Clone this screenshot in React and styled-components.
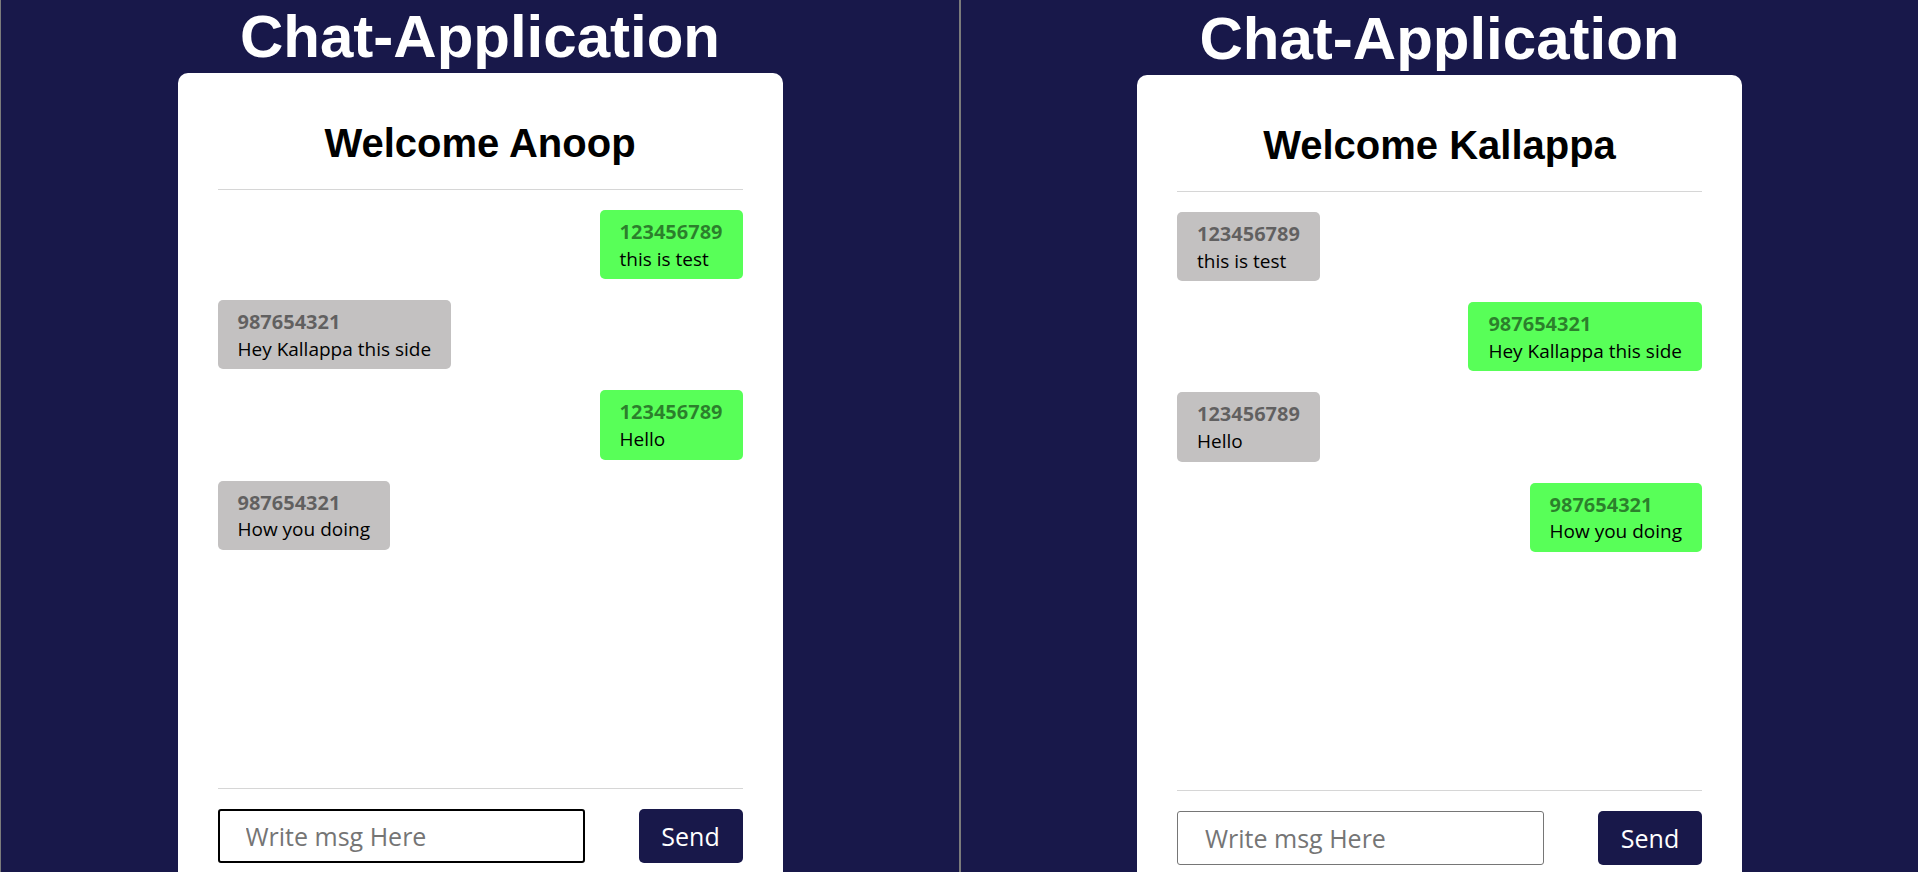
import React from 'react'
import styled, { createGlobalStyle } from 'styled-components'

const messages = [
    { from: '123456789', text: 'this is test' },
    { from: '987654321', text: 'Hey Kallappa this side' },
    { from: '123456789', text: 'Hello' },
    { from: '987654321', text: 'How you doing' },
]

function ChatWindow({ name, number, focused, edge, shift }) {
    return (
        <Pane $edge={edge} $shift={shift}>
            <Title>Chat-Application</Title>
            <Card>
                <Welcome>Welcome {name}</Welcome>
                <MessageList>
                    {messages.map((m, i) => (
                        <Bubble key={i} $mine={m.from === number}>
                            <Sender>{m.from}</Sender>
                            <Text>{m.text}</Text>
                        </Bubble>
                    ))}
                </MessageList>
                <Footer>
                    <MsgInput $focused={focused} placeholder="Write msg Here" />
                    <SendButton>Send</SendButton>
                </Footer>
            </Card>
        </Pane>
    )
}

export default function App() {
    return (
        <>
            <GlobalStyle />
            <Screen>
                <ChatWindow name="Anoop" number="123456789" focused edge={1} shift={1} />
                <ChatWindow name="Kallappa" number="987654321" edge={2} shift={3} />
            </Screen>
        </>
    )
}

const GlobalStyle = createGlobalStyle`
body {
    margin: 0;
    background: #18184a;
    overflow: hidden;
    font-family: "Open Sans", "Noto Sans", sans-serif;
}
`

const Screen = styled.div`
display: grid;
grid-template-columns: 959px 1fr;
height: 872px;
overflow: hidden;
`

const Pane = styled.section`
box-sizing: border-box;
border-left: ${p => p.$edge}px solid #7b7b7b;
padding-top: ${p => p.$shift}px;
min-width: 0;
`

const Title = styled.h1`
margin: 0;
font-family: "Liberation Sans", Arial, sans-serif;
font-weight: 700;
font-size: 60px;
line-height: 72px;
color: #fff;
text-align: center;
`

const Card = styled.div`
box-sizing: border-box;
width: 605px;
height: 830px;
margin: 0 auto;
padding: 0 40px;
background: #fff;
border-radius: 10px;
`

const Welcome = styled.h2`
margin: 0;
padding: 47px 0 23px;
font-family: "Liberation Sans", Arial, sans-serif;
font-weight: 700;
font-size: 40px;
line-height: 46px;
color: #000;
text-align: center;
border-bottom: 1px solid #d6d6d6;
`

const MessageList = styled.div`
box-sizing: border-box;
height: 598px;
padding: 20px 0;
display: flex;
flex-direction: column;
gap: 21px;
`

const Bubble = styled.div`
align-self: ${p => (p.$mine ? 'flex-end' : 'flex-start')};
background: ${p => (p.$mine ? '#58ff58' : '#c3c1c1')};
border-radius: 5px;
padding: 9px 20px 7px;
line-height: 26.6px;
`

const Sender = styled.div`
font-size: 20px;
font-weight: 700;
color: rgba(0, 0, 0, 0.5);
`

const Text = styled.div`
font-size: 19px;
color: #000;
`

const Footer = styled.div`
border-top: 1px solid #d6d6d6;
padding-top: 20px;
display: flex;
justify-content: space-between;
`

const MsgInput = styled.input`
box-sizing: border-box;
width: 367px;
height: 54px;
border: ${p => (p.$focused ? '2px solid #000' : '1px solid #767676')};
border-radius: 3px;
padding: 0 0 0 ${p => (p.$focused ? 26 : 27)}px;
font-family: "Open Sans", "Noto Sans", sans-serif;
font-size: 25px;
outline: none;
&::placeholder {
    color: #757575;
}
`

const SendButton = styled.button`
width: 104px;
height: 54px;
border: none;
border-radius: 5px;
background: #18184a;
color: #fff;
font-family: "Open Sans", "Noto Sans", sans-serif;
font-size: 25px;
`
